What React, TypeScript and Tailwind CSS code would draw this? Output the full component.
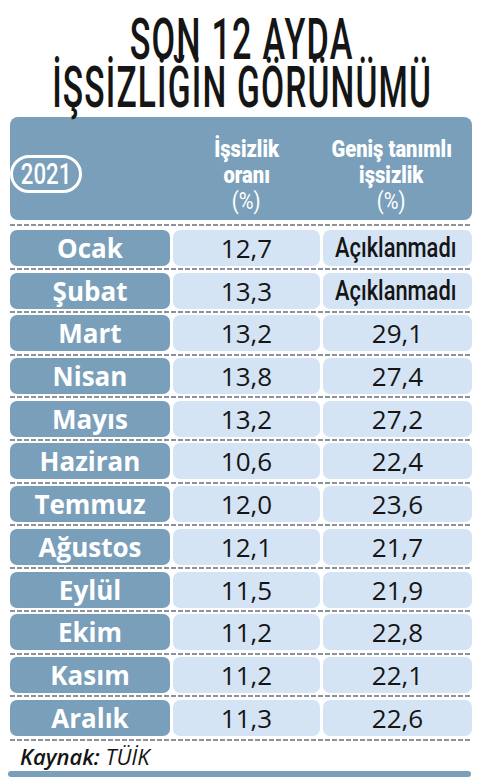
import React from "react";

const rows: [string, string, string][] = [
  ["Ocak", "12,7", "Açıklanmadı"],
  ["Şubat", "13,3", "Açıklanmadı"],
  ["Mart", "13,2", "29,1"],
  ["Nisan", "13,8", "27,4"],
  ["Mayıs", "13,2", "27,2"],
  ["Haziran", "10,6", "22,4"],
  ["Temmuz", "12,0", "23,6"],
  ["Ağustos", "12,1", "21,7"],
  ["Eylül", "11,5", "21,9"],
  ["Ekim", "11,2", "22,8"],
  ["Kasım", "11,2", "22,1"],
  ["Aralık", "11,3", "22,6"],
];

function Dash({ h }: { h: string }) {
  return (
    <div className={`flex items-center ${h}`}>
      <div className="h-[2px] w-full bg-[repeating-linear-gradient(90deg,#8c929a_0_5px,transparent_5px_7px)]" />
    </div>
  );
}

const roboto = { fontFamily: "Roboto, sans-serif" };

export default function App() {
  return (
    <div className="w-[484px] h-[782px] bg-white relative overflow-hidden" style={{ fontFamily: "'Open Sans', sans-serif" }}>
      <div className="flex flex-col items-center pt-[16px] text-[#151515]" style={roboto}>
        <div className="h-[48px] leading-[48px] text-[57px] font-medium whitespace-nowrap">
          <span className="inline-block scale-x-[0.6] tracking-[2px]">SON 12 AYDA</span>
        </div>
        <div className="h-[48px] leading-[48px] text-[57px] font-medium whitespace-nowrap">
          <span className="inline-block scale-x-[0.588] tracking-[2px]">İŞSİZLİĞİN GÖRÜNÜMÜ</span>
        </div>
      </div>

      <div className="mx-[10px] mt-[5px] w-[462px]">
        <div className="h-[103px] bg-[#7a9fbb] rounded-[8px] grid grid-cols-[160px_147px_149px] gap-x-[3px] text-white">
          <div className="flex items-center">
            <div className="mt-[10px] w-[72px] h-[38px] border-[3px] border-white rounded-full flex items-center justify-center">
              <span className="inline-block scale-x-[0.74] text-[30px] leading-none font-medium" style={roboto}>2021</span>
            </div>
          </div>
          <div className="flex flex-col items-center pt-[19px] leading-[26px] text-[24px] font-black" style={roboto}>
            <span className="inline-block scale-x-[0.84] whitespace-nowrap">İşsizlik</span>
            <span className="inline-block scale-x-[0.84] whitespace-nowrap">oranı</span>
            <span className="inline-block scale-x-[0.84] font-normal whitespace-nowrap">(%)</span>
          </div>
          <div className="flex flex-col items-center pt-[19px] leading-[26px] text-[24px] font-black -ml-[12px]" style={roboto}>
            <span className="inline-block scale-x-[0.84] whitespace-nowrap">Geniş tanımlı</span>
            <span className="inline-block scale-x-[0.84] whitespace-nowrap">işsizlik</span>
            <span className="inline-block scale-x-[0.84] font-normal whitespace-nowrap">(%)</span>
          </div>
        </div>
        <Dash h="h-[10px]" />
        {rows.map((r, i) => (
          <React.Fragment key={r[0]}>
            {i > 0 && <Dash h="h-[6.7px]" />}
            <div className="h-[36px] grid grid-cols-[160px_147px_149px] gap-x-[3px]">
              <div className="bg-[#7a9fbb] rounded-[7px] flex items-center justify-center text-white font-bold text-[26px] leading-none">
                {r[0]}
              </div>
              <div className="bg-[#d5e4f4] rounded-[7px] flex items-center justify-center text-[#151515] text-[26px] leading-none">
                {r[1]}
              </div>
              <div className="bg-[#d5e4f4] rounded-[7px] flex items-center justify-center text-[#151515] text-[26px] leading-none">
                {r[2] === "Açıklanmadı" ? (
                  <span className="inline-block scale-x-[0.78] whitespace-nowrap font-medium text-[28px] -ml-[4px]" style={roboto}>{r[2]}</span>
                ) : (
                  r[2]
                )}
              </div>
            </div>
          </React.Fragment>
        ))}
        <Dash h="h-[8px]" />
        <div className="pl-[10px] italic text-[22px] leading-[24px] text-[#151515]">
          <span className="font-semibold">Kaynak:</span> TÜİK
        </div>
        <div className="mt-[3px] -ml-[2px] h-[6px] w-[463px] rounded-full bg-[#7a9fbb]" />
      </div>
    </div>
  );
}
